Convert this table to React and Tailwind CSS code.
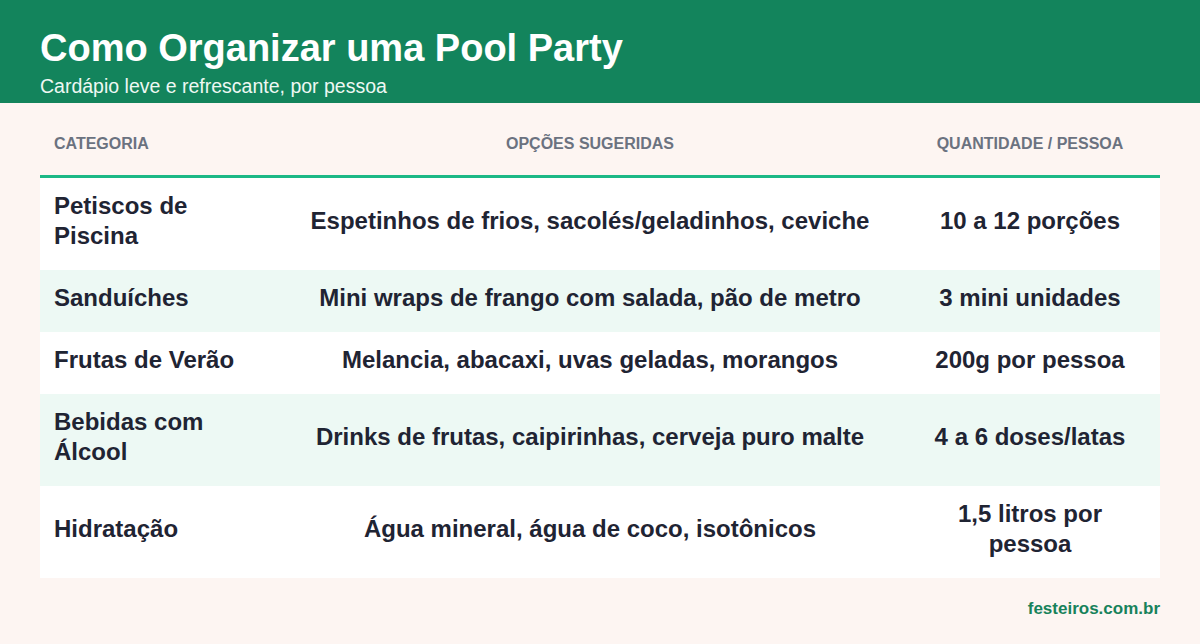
import React from "react";

const rows = [
  { cat: "Petiscos de Piscina", opts: "Espetinhos de frios, sacolés/geladinhos, ceviche", qty: "10 a 12 porções" },
  { cat: "Sanduíches", opts: "Mini wraps de frango com salada, pão de metro", qty: "3 mini unidades" },
  { cat: "Frutas de Verão", opts: "Melancia, abacaxi, uvas geladas, morangos", qty: "200g por pessoa" },
  { cat: "Bebidas com Álcool", opts: "Drinks de frutas, caipirinhas, cerveja puro malte", qty: "4 a 6 doses/latas" },
  { cat: "Hidratação", opts: "Água mineral, água de coco, isotônicos", qty: "1,5 litros por pessoa" },
];

const App = () => {
  return (
    <div className="w-[1200px] h-[644px] bg-[#fdf5f2] font-['Liberation_Sans',Arial,sans-serif] overflow-hidden">
      {/* header band */}
      <div className="h-[103px] bg-[#13845c] px-10 pt-[26px]">
        <h1 className="text-[38px] leading-[44px] font-bold text-white">Como Organizar uma Pool Party</h1>
        <p className="text-[19.5px] leading-[24px] text-[#eef8f3] mt-[4px]">Cardápio leve e refrescante, por pessoa</p>
      </div>

      <div className="px-10">
        <div className="grid grid-cols-[240px_620px_260px] h-[75px] border-b-[3px] border-[#1cb886] pt-[29px] text-[16px] leading-[24px] font-bold text-[#6b7280] uppercase">
          <div className="px-[14px]">Categoria</div>
          <div className="px-[14px] text-center">Opções Sugeridas</div>
          <div className="px-[14px] text-center">Quantidade / Pessoa</div>
        </div>

        {rows.map((row, i) => (
          <div
            key={row.cat}
            className={`grid grid-cols-[240px_620px_260px] items-center pt-[13px] pb-[19px] text-[24px] leading-[30px] font-bold text-[#1f2433] ${
              i % 2 === 1 ? "bg-[#edf9f4]" : "bg-white"
            }`}
          >
            <div className="px-[14px]">{row.cat}</div>
            <div className="px-[14px] text-center">{row.opts}</div>
            <div className="px-[14px] text-center">{row.qty}</div>
          </div>
        ))}

        <div className="flex justify-end pt-[21px]">
          <span className="text-[17px] leading-[20px] font-bold text-[#17825b]">festeiros.com.br</span>
        </div>
      </div>
    </div>
  );
};

export default App;
